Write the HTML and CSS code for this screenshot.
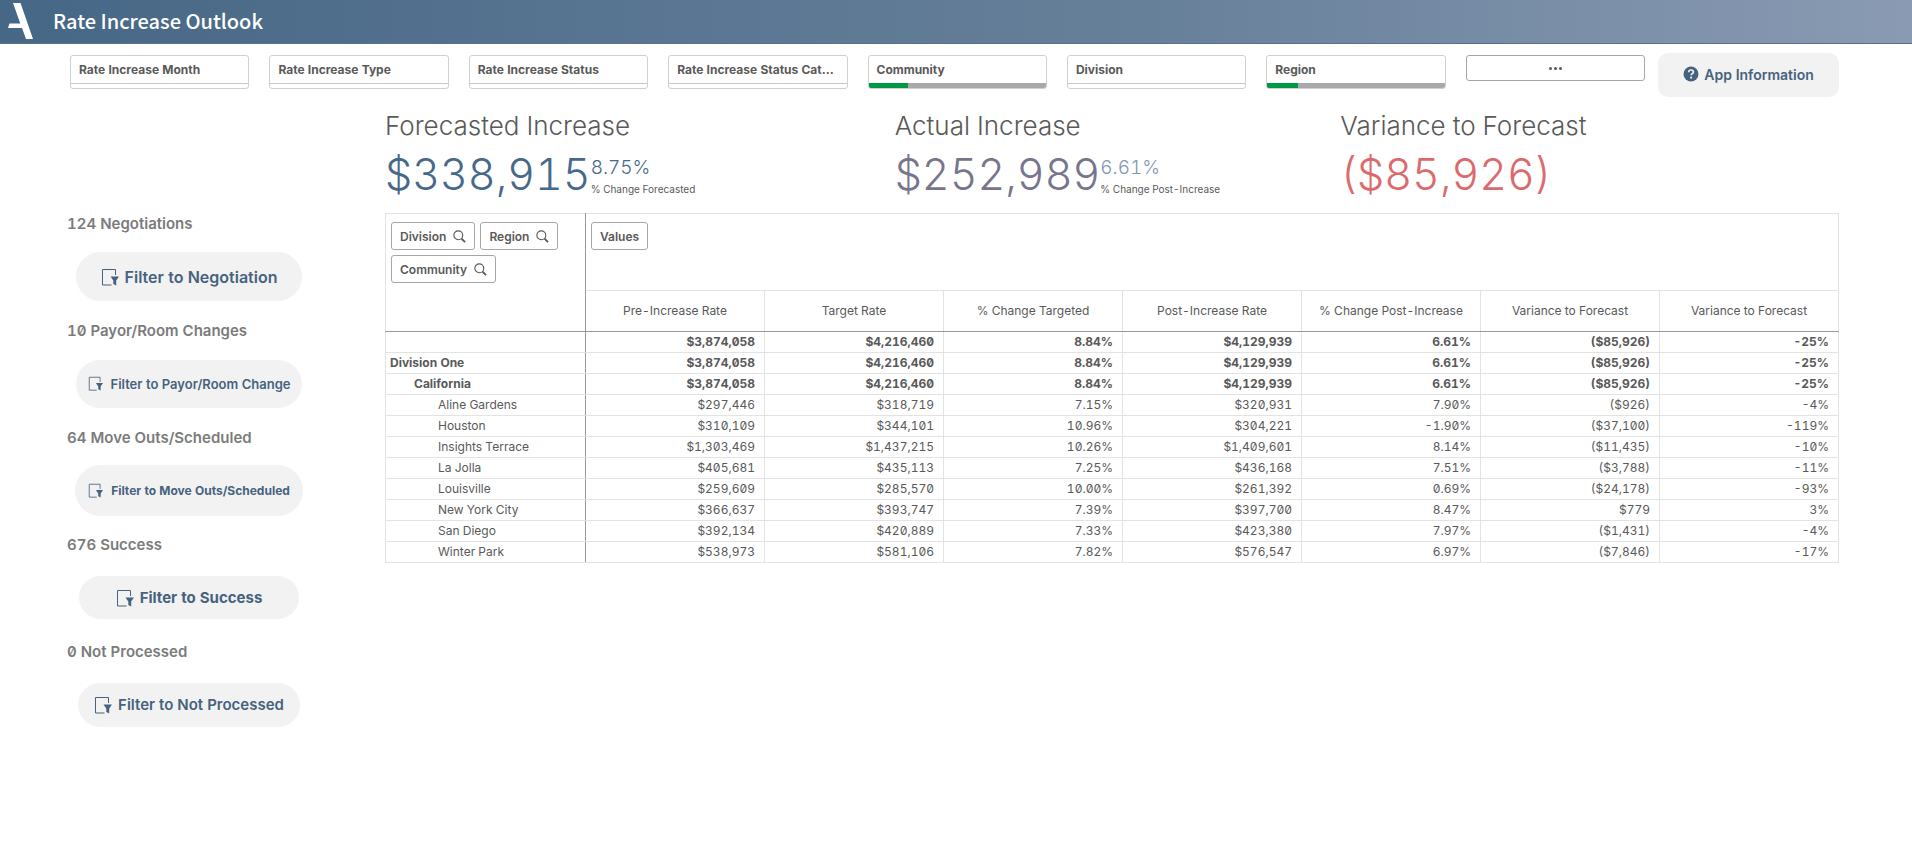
FILE: index.html
```html
<!DOCTYPE html>
<html lang="en">
<head>
<meta charset="utf-8">
<title>Rate Increase Outlook</title>
<link rel="stylesheet" href="styles.css">
</head>
<body>
<svg class="defs" width="0" height="0" aria-hidden="true">
  <symbol id="sheet-filter" viewBox="0 0 18 18">
    <path d="M14.500 7V1.500H1.500V17H10.500" fill="none" stroke="currentColor" stroke-width="1"/>
    <path d="M9.500 8.500H18L15.200 12.500V17.500L12.300 16V12.500z" fill="currentColor"/>
  </symbol>
  <symbol id="search" viewBox="0 0 14 14">
    <circle cx="5.700" cy="5.700" r="4.800" fill="none" stroke="currentColor" stroke-width="1.200"/>
    <path d="M9.200 9.200l3.800 3.800" stroke="currentColor" stroke-width="2" fill="none"/>
  </symbol>
</svg>

<header class="topbar">
  <svg class="logo" width="26" height="38" viewBox="0 0 26 38" aria-hidden="true">
    <path d="M5 1h7.500L25 37h-7L14 26H0l1.500-4.500h10.800z" fill="#fff"/>
  </svg>
  <h1 class="title">Rate Increase Outlook</h1>
</header>

<div class="page">
  <div class="toolbar">
    <div class="filters">
      <button class="filter" type="button"><span class="filter-name">Rate Increase Month</span><span class="state"></span></button>
      <button class="filter" type="button"><span class="filter-name">Rate Increase Type</span><span class="state"></span></button>
      <button class="filter" type="button"><span class="filter-name">Rate Increase Status</span><span class="state"></span></button>
      <button class="filter" type="button"><span class="filter-name">Rate Increase Status Cat…</span><span class="state"></span></button>
      <button class="filter" type="button"><span class="filter-name">Community</span><span class="state state-on"><span class="state-fill" style="width:22.500%"></span></span></button>
      <button class="filter" type="button"><span class="filter-name">Division</span><span class="state"></span></button>
      <button class="filter" type="button"><span class="filter-name">Region</span><span class="state state-on"><span class="state-fill" style="width:17.500%"></span></span></button>
      <button class="more" type="button" aria-label="More filters"><span class="dot"></span><span class="dot"></span><span class="dot"></span></button>
    </div>
    <button class="info" type="button">
      <svg width="16" height="16" viewBox="0 0 16 16" aria-hidden="true">
        <circle cx="8" cy="8" r="7.500" fill="currentColor"/>
        <path d="M5.600 6.200C5.700 4.800 6.700 4 8 4s2.400.800 2.400 2c0 1.600-2.200 1.700-2.200 3.300" fill="none" stroke="#f2f2f2" stroke-width="1.600"/>
        <circle cx="8.100" cy="11.600" r="1.100" fill="#f2f2f2"/>
      </svg>
      App Information
    </button>
  </div>

  <div class="content">
    <aside class="sidebar">
      <section class="group"><h2 class="count">124 Negotiations</h2><div class="slot"><button class="pill pill-a" type="button"><svg class="pill-icon" aria-hidden="true"><use href="#sheet-filter"/></svg>Filter to Negotiation</button></div></section>
      <section class="group"><h2 class="count">10 Payor/Room Changes</h2><div class="slot"><button class="pill pill-b" type="button"><svg class="pill-icon" aria-hidden="true"><use href="#sheet-filter"/></svg>Filter to Payor/Room Change</button></div></section>
      <section class="group"><h2 class="count">64 Move Outs/Scheduled</h2><div class="slot"><button class="pill pill-c" type="button"><svg class="pill-icon" aria-hidden="true"><use href="#sheet-filter"/></svg>Filter to Move Outs/Scheduled</button></div></section>
      <section class="group"><h2 class="count">676 Success</h2><div class="slot"><button class="pill pill-d" type="button"><svg class="pill-icon" aria-hidden="true"><use href="#sheet-filter"/></svg>Filter to Success</button></div></section>
      <section class="group"><h2 class="count">0 Not Processed</h2><div class="slot"><button class="pill pill-e" type="button"><svg class="pill-icon" aria-hidden="true"><use href="#sheet-filter"/></svg>Filter to Not Processed</button></div></section>
    </aside>

    <main class="main">
      <div class="kpis">
        <section class="kpi">
          <h2 class="kpi-title">Forecasted Increase</h2>
          <div class="kpi-row"><span class="kpi-value blue">$338,915</span><div class="kpi-side"><span class="kpi-pct blue">8.75%</span><span class="kpi-note">% Change Forecasted</span></div></div>
        </section>
        <section class="kpi">
          <h2 class="kpi-title">Actual Increase</h2>
          <div class="kpi-row"><span class="kpi-value mauve">$252,989</span><div class="kpi-side"><span class="kpi-pct steel">6.61%</span><span class="kpi-note">% Change Post-Increase</span></div></div>
        </section>
        <section class="kpi">
          <h2 class="kpi-title">Variance to Forecast</h2>
          <div class="kpi-row"><span class="kpi-value red">($85,926)</span></div>
        </section>
      </div>

      <table class="pivot">
        <colgroup><col class="col-name"><col span="7"></colgroup>
        <thead>
          <tr class="dims">
            <th class="corner" rowspan="2">
              <div class="chips">
                <button class="chip" type="button">Division<svg class="chip-icon" aria-hidden="true"><use href="#search"/></svg></button>
                <button class="chip" type="button">Region<svg class="chip-icon" aria-hidden="true"><use href="#search"/></svg></button>
                <button class="chip" type="button">Community<svg class="chip-icon" aria-hidden="true"><use href="#search"/></svg></button>
              </div>
            </th>
            <th class="values" colspan="7"><div class="chips"><button class="chip" type="button">Values</button></div></th>
          </tr>
          <tr class="measures"><th>Pre-Increase Rate</th><th>Target Rate</th><th>% Change Targeted</th><th>Post-Increase Rate</th><th>% Change Post-Increase</th><th>Variance to Forecast</th><th>Variance to Forecast</th></tr>
        </thead>
        <tbody>
          <tr class="total"><th></th><td>$3,874,058</td><td>$4,216,460</td><td>8.84%</td><td>$4,129,939</td><td>6.61%</td><td>($85,926)</td><td>-25%</td></tr>
          <tr class="total"><th>Division One</th><td>$3,874,058</td><td>$4,216,460</td><td>8.84%</td><td>$4,129,939</td><td>6.61%</td><td>($85,926)</td><td>-25%</td></tr>
          <tr class="total level-2"><th>California</th><td>$3,874,058</td><td>$4,216,460</td><td>8.84%</td><td>$4,129,939</td><td>6.61%</td><td>($85,926)</td><td>-25%</td></tr>
          <tr class="level-3"><th>Aline Gardens</th><td>$297,446</td><td>$318,719</td><td>7.15%</td><td>$320,931</td><td>7.90%</td><td>($926)</td><td>-4%</td></tr>
          <tr class="level-3"><th>Houston</th><td>$310,109</td><td>$344,101</td><td>10.96%</td><td>$304,221</td><td>-1.90%</td><td>($37,100)</td><td>-119%</td></tr>
          <tr class="level-3"><th>Insights Terrace</th><td>$1,303,469</td><td>$1,437,215</td><td>10.26%</td><td>$1,409,601</td><td>8.14%</td><td>($11,435)</td><td>-10%</td></tr>
          <tr class="level-3"><th>La Jolla</th><td>$405,681</td><td>$435,113</td><td>7.25%</td><td>$436,168</td><td>7.51%</td><td>($3,788)</td><td>-11%</td></tr>
          <tr class="level-3"><th>Louisville</th><td>$259,609</td><td>$285,570</td><td>10.00%</td><td>$261,392</td><td>0.69%</td><td>($24,178)</td><td>-93%</td></tr>
          <tr class="level-3"><th>New York City</th><td>$366,637</td><td>$393,747</td><td>7.39%</td><td>$397,700</td><td>8.47%</td><td>$779</td><td>3%</td></tr>
          <tr class="level-3"><th>San Diego</th><td>$392,134</td><td>$420,889</td><td>7.33%</td><td>$423,380</td><td>7.97%</td><td>($1,431)</td><td>-4%</td></tr>
          <tr class="level-3"><th>Winter Park</th><td>$538,973</td><td>$581,106</td><td>7.82%</td><td>$576,547</td><td>6.97%</td><td>($7,846)</td><td>-17%</td></tr>
        </tbody>
      </table>
    </main>
  </div>
</div>
</body>
</html>
```

FILE: styles.css
```css
* { box-sizing: border-box; }

body {
  margin: 0;
  background: #fff;
  color: #595959;
  font-family: Inter, Roboto, sans-serif;
  font-feature-settings: "zero" 1, "tnum" 1;
  font-size: 12px;
}

button { font: inherit; font-feature-settings: inherit; color: inherit; cursor: pointer; }
h1, h2 { margin: 0; }
.defs { display: block; }

.topbar {
  display: flex;
  align-items: center;
  gap: 19px;
  height: 44px;
  padding: 0 8px 2px;
  background: linear-gradient(to right, #466786, #67809a 60%, #8a9ab3);
  border-bottom: 1px solid #5c7088;
}
.logo { flex: none; }
.title {
  color: #fff;
  font-family: "Noto Sans CJK SC", "Noto Sans", sans-serif;
  font-size: 20px;
  font-weight: 500;
  line-height: 30px;
}

.page { padding: 9px 73px 0 67px; }

.toolbar { display: flex; align-items: flex-start; gap: 13px; padding-left: 3px; }
.filters {
  flex: 1;
  display: grid;
  grid-template-columns: repeat(8, minmax(0, 1fr));
  gap: 20px;
  align-items: start;
  padding-top: 2px;
}
.filter {
  display: flex;
  flex-direction: column;
  padding: 0;
  background: #fff;
  border: 1px solid #d0d0d0;
  border-radius: 3px;
  overflow: hidden;
  text-align: left;
  font-weight: 700;
}
.filter-name { padding: 0 8px; line-height: 27px; white-space: nowrap; }
.state { display: block; width: 100%; height: 5px; border-top: 1px solid #c8c8c8; }
.state-on { border-top: 0; background: #a9a9a9; }
.state-fill { display: block; height: 5px; background: #009845; }
.more {
  display: flex;
  justify-content: center;
  align-items: center;
  gap: 2px;
  height: 26px;
  padding: 0;
  background: #fff;
  border: 1px solid #a6a6a6;
  border-radius: 3px;
}
.dot { width: 3px; height: 3px; border-radius: 50%; background: #595959; }
.info {
  display: flex;
  justify-content: center;
  align-items: center;
  gap: 5px;
  width: 181px;
  height: 44px;
  padding: 0 0 2px;
  border: 0;
  border-radius: 10px;
  background: #f2f2f2;
  color: #46627f;
  font-size: 14px;
  font-weight: 600;
}

.content { display: flex; gap: 74px; }

.sidebar { flex: none; width: 244px; padding-top: 116px; }
.group { height: 107px; }
.count { color: #7b7b7b; font-size: 15px; font-weight: 600; line-height: 22px; }
.slot { display: flex; justify-content: center; align-items: center; height: 83px; }
.pill {
  display: flex;
  justify-content: center;
  align-items: center;
  gap: 6px;
  padding: 0;
  border: 0;
  border-radius: 26px;
  background: #f2f2f2;
  color: #46627f;
  font-size: 15px;
  font-weight: 700;
  white-space: nowrap;
}
.pill-icon { width: 18px; height: 18px; }
.pill-a { width: 226px; height: 49px; font-size: 16px; font-weight: 600; }
.pill-b { width: 226px; height: 48px; gap: 8px; font-size: 13px; font-weight: 600; }
.pill-c { width: 228px; height: 51px; gap: 8px; font-size: 12px; }
.pill-d { width: 220px; height: 43px; }
.pill-e { width: 222px; height: 44px; font-weight: 600; }
.pill-b .pill-icon, .pill-c .pill-icon { width: 15px; height: 15px; }

.main { flex: 1; min-width: 0; }
.kpis { display: grid; grid-template-columns: 509fr 445fr 498fr; height: 116px; padding-top: 10px; }
.kpi-title { font-size: 26px; font-weight: 300; line-height: 37px; }
.kpi-row { display: flex; }
.kpi-value { font-size: 43px; font-weight: 300; line-height: 60px; }
.kpi-side { display: flex; flex-direction: column; padding-top: 11px; }
.kpi-pct { font-size: 19px; font-weight: 300; line-height: 26px; }
.kpi-note { font-size: 10px; line-height: 16px; }
.blue { color: #46698a; }
.mauve { color: #77758c; }
.steel { color: #7f97b3; }
.red { color: #dc6a6c; }

.pivot {
  width: 100%;
  table-layout: fixed;
  border-collapse: collapse;
  border: 1px solid #e3e3e3;
}
.col-name { width: 200px; }
.pivot th, .pivot td { padding: 0 9px 0 4px; border: 1px solid #e3e3e3; font-weight: 400; }
.pivot tbody th, .pivot td { height: 21px; padding-bottom: 1px; line-height: 19px; }
.pivot td { text-align: right; }
.pivot tbody th { border-right-color: #999; text-align: left; }
.pivot .corner { padding: 8px 5px; border-right-color: #999; border-bottom-color: #999; vertical-align: top; }
.pivot .values { height: 77px; padding: 8px 5px; vertical-align: top; }
.pivot .measures th { height: 41px; padding: 0 4px 2px; border-bottom-color: #999; text-align: center; }
.pivot .total th, .pivot .total td { font-weight: 700; }
.pivot .level-2 th { padding-left: 28px; }
.pivot .level-3 th { padding-left: 52px; }

.chips { display: flex; flex-wrap: wrap; gap: 5px; }
.chip {
  display: flex;
  align-items: center;
  gap: 7px;
  height: 28px;
  padding: 0 8px;
  background: #fff;
  border: 1px solid #a6a6a6;
  border-radius: 3px;
  font-weight: 600;
}
.chip-icon { width: 13px; height: 13px; }
```
